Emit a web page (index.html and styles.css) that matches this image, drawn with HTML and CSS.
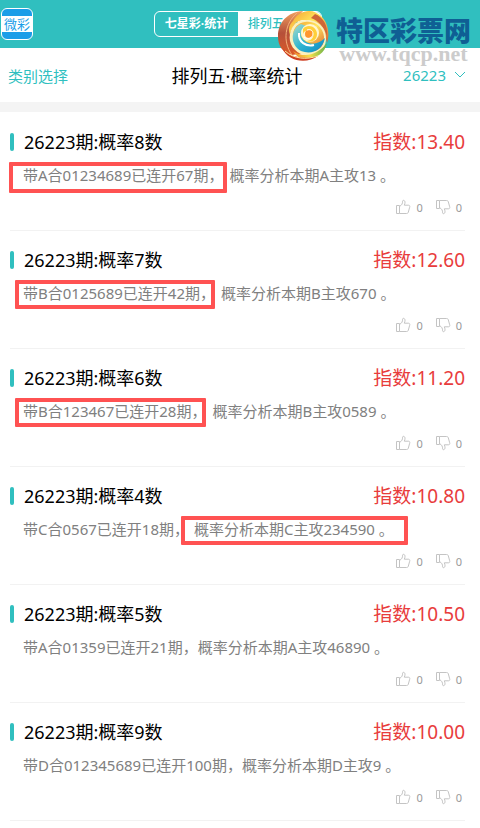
FILE: index.html
```html
<!DOCTYPE html>
<html lang="zh-CN">
<head>
    <meta charset="UTF-8">
    <meta name="viewport" content="width=device-width, initial-scale=1.0">
    <title>排列五·概率统计</title>
    <link rel="stylesheet" href="styles.css">
</head>
<body>
    <!-- Shared icons -->
    <svg class="sprite" aria-hidden="true">
        <symbol id="thumb" viewBox="0 0 16 16">
            <path d="M1.5 6.5h3v8h-3zM4.500 7.500C7 6 7.600 4.500 7.600 2.200C7.600 .9 10 .9 10 3.200C10 4.500 9.700 5.200 9.300 6.200H13.500C14.700 6.200 15 7.200 14.700 8.200L13.300 13.200C13 14.200 12.500 14.500 11.500 14.500H4.500"/>
        </symbol>
    </svg>

    <header class="topbar">
        <a class="app-logo" href="#"><span>微彩</span></a>
        <nav class="tabs">
            <a class="tab" href="#">七星彩·统计</a>
            <a class="tab active" href="#">排列五·统计</a>
        </nav>
        <div class="site-logo">
            <svg class="swirl" viewBox="0 0 52 52" aria-hidden="true">
                <defs>
                    <linearGradient id="red" x1="0" y1="0" x2="0" y2="1">
                        <stop offset="0" stop-color="#f0a060"/>
                        <stop offset=".5" stop-color="#b5503a"/>
                        <stop offset="1" stop-color="#dc5a28"/>
                    </linearGradient>
                    <linearGradient id="gold" x1="0" y1="0" x2="1" y2="1">
                        <stop offset="0" stop-color="#f39a2c"/>
                        <stop offset=".45" stop-color="#ffe65c"/>
                        <stop offset="1" stop-color="#dc5f30"/>
                    </linearGradient>
                    <linearGradient id="lake" x1="0" y1="0" x2="1" y2="1">
                        <stop offset="0" stop-color="#a8dccb"/>
                        <stop offset=".5" stop-color="#2fb5d0"/>
                        <stop offset="1" stop-color="#0a86c4"/>
                    </linearGradient>
                    <linearGradient id="leaf" x1="0" y1="0" x2="1" y2="0">
                        <stop offset="0" stop-color="#f08a2c"/>
                        <stop offset=".5" stop-color="#f5e04a"/>
                        <stop offset="1" stop-color="#5fb04a"/>
                    </linearGradient>
                </defs>
                <!-- left crescents -->
                <path d="M26 2C10 3 1 14 1 27C1 37 5 43 15 46L28 44C14 38 10 20 26 2z" fill="url(#red)"/>
                <path d="M20 4C8 14 5 32 15 46" fill="none" stroke="#f3b07a"/>
                <!-- top and right bands -->
                <path d="M16 12C22 1 36 -2 45 8C51 14 53 25 50 34C48 21 41 13 30 11C20 10 15 16 13 26C11 20 12 16 16 12z" fill="url(#gold)"/>
                <path d="M38 5C46 8 51 16 50 27C47 18 42 12 34 9z" fill="#cf6638"/>
                <!-- inner bowl -->
                <path d="M30 11C42 11 50 20 49 31C48 42 38 48 28 46C17 44 11 34 13 25C15 15 21 11 30 11z" fill="#fbf0bd"/>
                <path d="M28 13C40 11 48 21 47 31C46 40 38 44 29 42C20 40 15 33 16 25C17 18 21 14 28 13z" fill="url(#gold)"/>
                <path d="M24 15C13 20 13 36 24 42C34 46 45 42 48 29C41 36 33 36 28 32C22 27 23 21 29 17z" fill="url(#lake)"/>
                <path d="M22 24C21 33 29 38 37 36" fill="none" stroke="#fff" stroke-width="2"/>
                <circle cx="33" cy="24" r="9" fill="#fff6cf"/>
                <path d="M26 20C31 14 40 18 40 25C40 31 35 34 30 32C35 31 37 28 36 25C34 21 28 20 26 25z" fill="#ffcf3a"/>
                <circle cx="32" cy="25" r="4" fill="#ff962e"/>
                <path d="M27 28C30 31 36 29 36 25C36 21 33 20 30 21" fill="none" stroke="#fff"/>
                <!-- bottom crescents -->
                <path d="M16 42C26 49 40 47 50 34C48 44 39 50 29 50C23 50 19 47 16 42z" fill="url(#leaf)"/>
                <path d="M5 39C12 48 26 51 41 47C30 55 11 53 5 39z" fill="#cf3f22"/>
                <path d="M8 42C17 50 29 51 41 47" fill="none" stroke="#ffe9a0"/>
            </svg>
            <div class="site-name">
                <strong>特区彩票网</strong>
                <span>www.tqcp.net</span>
            </div>
        </div>
    </header>

    <div class="subbar">
        <a class="category" href="#">类别选择</a>
        <h1>排列五·概率统计</h1>
        <button class="issue" type="button">26223
            <svg viewBox="0 0 12 8" aria-hidden="true"><path d="M1 1l5 5 5-5"/></svg>
        </button>
    </div>

    <main class="list">
        <article class="item">
            <div class="item-head"><h2>26223期:概率8数</h2><span class="score">指数:13.40</span></div>
            <p><span class="mark mark-wide">带A合01234689已连开67期，</span>概率分析本期A主攻13 。</p>
            <div class="votes">
                <button type="button" aria-label="赞"><svg><use href="#thumb"/></svg>0</button>
                <button type="button" aria-label="踩"><svg class="down"><use href="#thumb"/></svg>0</button>
            </div>
        </article>
        <article class="item">
            <div class="item-head"><h2>26223期:概率7数</h2><span class="score">指数:12.60</span></div>
            <p><span class="mark">带B合0125689已连开42期，</span>概率分析本期B主攻670 。</p>
            <div class="votes">
                <button type="button" aria-label="赞"><svg><use href="#thumb"/></svg>0</button>
                <button type="button" aria-label="踩"><svg class="down"><use href="#thumb"/></svg>0</button>
            </div>
        </article>
        <article class="item">
            <div class="item-head"><h2>26223期:概率6数</h2><span class="score">指数:11.20</span></div>
            <p><span class="mark">带B合123467已连开28期，</span>概率分析本期B主攻0589 。</p>
            <div class="votes">
                <button type="button" aria-label="赞"><svg><use href="#thumb"/></svg>0</button>
                <button type="button" aria-label="踩"><svg class="down"><use href="#thumb"/></svg>0</button>
            </div>
        </article>
        <article class="item">
            <div class="item-head"><h2>26223期:概率4数</h2><span class="score">指数:10.80</span></div>
            <p>带C合0567已连开18期，<span class="mark mark-tail">概率分析本期C主攻234590 。</span></p>
            <div class="votes">
                <button type="button" aria-label="赞"><svg><use href="#thumb"/></svg>0</button>
                <button type="button" aria-label="踩"><svg class="down"><use href="#thumb"/></svg>0</button>
            </div>
        </article>
        <article class="item">
            <div class="item-head"><h2>26223期:概率5数</h2><span class="score">指数:10.50</span></div>
            <p>带A合01359已连开21期，概率分析本期A主攻46890 。</p>
            <div class="votes">
                <button type="button" aria-label="赞"><svg><use href="#thumb"/></svg>0</button>
                <button type="button" aria-label="踩"><svg class="down"><use href="#thumb"/></svg>0</button>
            </div>
        </article>
        <article class="item">
            <div class="item-head"><h2>26223期:概率9数</h2><span class="score">指数:10.00</span></div>
            <p>带D合012345689已连开100期，概率分析本期D主攻9 。</p>
            <div class="votes">
                <button type="button" aria-label="赞"><svg><use href="#thumb"/></svg>0</button>
                <button type="button" aria-label="踩"><svg class="down"><use href="#thumb"/></svg>0</button>
            </div>
        </article>
    </main>
</body>
</html>
```

FILE: styles.css
```css
* {
    box-sizing: border-box;
}

body {
    margin: 0;
    background: #fff;
    color: #000;
    font-family: "Noto Sans", "Noto Sans CJK SC", sans-serif;
}

a {
    text-decoration: none;
}

button {
    padding: 0;
    border: 0;
    background: none;
    font-family: inherit;
    cursor: pointer;
}

h1, h2, p {
    margin: 0;
    font-weight: 400;
}

.sprite {
    display: none;
}

/* Top bar */
.topbar {
    position: relative;
    display: flex;
    align-items: center;
    justify-content: center;
    height: 48px;
    background: #30bfbf;
}

.app-logo {
    position: absolute;
    left: 1px;
    top: 8px;
    display: flex;
    align-items: center;
    width: 32px;
    height: 32px;
    border: 1px solid #fff;
    border-radius: 6px;
    background: #1b9de8;
}

.app-logo span {
    width: 100%;
    background: #fff;
    color: #1b9de8;
    font-size: 13px;
    line-height: 16px;
    text-align: center;
}

.tabs {
    display: flex;
    margin-left: -4px;
    border: 1px solid #fff;
    border-radius: 6px;
}

.tab {
    width: 83px;
    color: #fff;
    font-size: 12px;
    font-weight: 700;
    line-height: 24px;
    text-align: center;
}

.tab.active {
    border-radius: 0 5px 5px 0;
    background: #fff;
    color: #30bfbf;
    font-weight: 500;
}

/* Site logo lies over the two bars */
.site-logo {
    position: absolute;
    top: 9px;
    right: 9px;
    display: flex;
    gap: 7px;
}

.swirl {
    width: 52px;
    height: 52px;
}

.site-name {
    display: flex;
    flex-direction: column;
    align-items: center;
    gap: 2px;
    padding-top: 7px;
}

.site-name strong {
    color: #0f5f94;
    font-family: "Noto Sans CJK SC", sans-serif;
    font-size: 27px;
    font-weight: 900;
    line-height: 28px;
}

.site-name span {
    color: #ccc;
    font-family: "Liberation Serif", serif;
    font-size: 22px;
    font-weight: 700;
    line-height: 16px;
}

/* Title bar */
.subbar {
    display: grid;
    grid-template-columns: 1fr auto 1fr;
    align-items: center;
    height: 64px;
    padding: 0 14px 0 8px;
    border-bottom: 10px solid #f4f4f4;
}

.subbar h1 {
    font-size: 18px;
}

.category,
.issue {
    color: #30bfbf;
    font-size: 15px;
}

.issue {
    display: flex;
    align-items: center;
    justify-self: end;
    gap: 8px;
}

.issue svg {
    width: 12px;
    height: 8px;
    fill: none;
    stroke: #30bfbf;
}

/* Forecast list */
.list {
    padding: 1px 15px 0 10px;
}

.item {
    padding: 17px 0 14px;
    border-bottom: 1px solid #f2f2f2;
}

.item-head {
    display: flex;
    align-items: center;
    justify-content: space-between;
    height: 24px;
}

.item h2 {
    display: flex;
    align-items: center;
    gap: 10px;
    font-size: 18px;
    line-height: 24px;
}

.item h2::before {
    content: "";
    width: 4px;
    height: 18px;
    border-radius: 2px;
    background: #30bfbf;
}

.score {
    color: #e83c3c;
    font-size: 19px;
    line-height: 24px;
}

.item p {
    padding: 9px 0 11px 13px;
    color: #808080;
    font-size: 15px;
    line-height: 24px;
    white-space: nowrap;
}

/* Red frame around the highlighted phrase */
.mark {
    position: relative;
    margin-right: 6px;
}

.mark::after {
    content: "";
    position: absolute;
    inset: -3px 0 -6px -8px;
    border: 4px solid #ff5252;
    border-radius: 1px;
}

.mark-wide::after {
    left: -14px;
    right: -4px;
    bottom: -8px;
}

.mark-tail {
    margin-left: 5px;
}

.mark-tail::after {
    left: -13px;
    right: -14px;
}

.votes {
    display: flex;
    justify-content: flex-end;
    gap: 12px;
    padding-right: 3px;
}

.votes button {
    display: flex;
    align-items: center;
    gap: 5px;
    height: 18px;
    color: #999;
    font-size: 11px;
}

.votes svg {
    width: 16px;
    height: 16px;
    fill: none;
    stroke: #c4c4c4;
}

.votes .down {
    transform: rotate(180deg) scaleX(-1);
}
```
